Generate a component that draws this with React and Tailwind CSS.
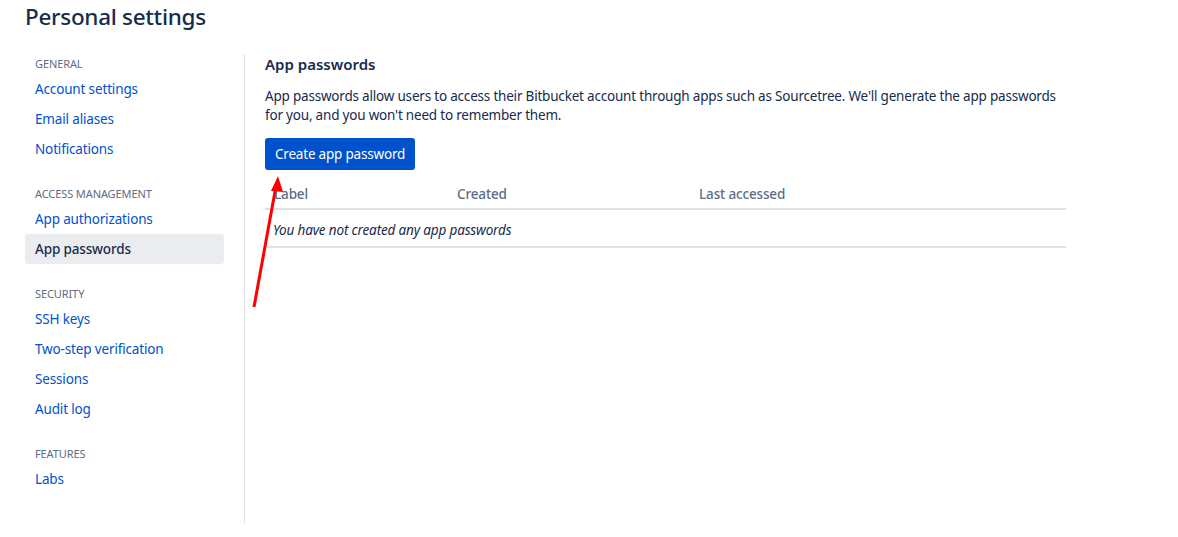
import React from "react";

const sections = [
  { title: "GENERAL", items: ["Account settings", "Email aliases", "Notifications"] },
  { title: "ACCESS MANAGEMENT", items: ["App authorizations", "App passwords"] },
  { title: "SECURITY", items: ["SSH keys", "Two-step verification", "Sessions", "Audit log"] },
  { title: "FEATURES", items: ["Labs"] },
];

export default function App() {
  return (
    <div
      className="relative w-[1178px] h-[537px] bg-white text-[#172b4d] overflow-hidden"
      style={{ fontFamily: '"Noto Sans", "Open Sans", sans-serif' }}
    >
      <h1 className="pl-[25px] pt-[2px] h-[54px] text-[22.5px] leading-[30px] font-medium text-[#172b4d] tracking-[-0.3px]">
        Personal settings
      </h1>
      <div className="flex">
        <nav className="w-[219px] ml-[25px] pb-[14px]">
          {sections.map((s, si) => (
            <div key={s.title} className={si === 0 ? "" : "mt-[20px]"}>
              <div className="h-[20px] pl-[10px] flex items-center text-[11px] text-[#5e6c84] tracking-[-0.1px]">
                {s.title}
              </div>
              {s.items.map((it) => {
                const active = it === "App passwords";
                return (
                  <div
                    key={it}
                    className={
                      "h-[30px] w-[199px] pl-[10px] flex items-center text-[13.5px] tracking-[-0.15px] rounded-[3px] " +
                      (active ? "bg-[#ebecf0] text-[#172b4d] font-medium" : "text-[#0052cc]")
                    }
                  >
                    {it}
                  </div>
                );
              })}
            </div>
          ))}
        </nav>
        <div className="w-px bg-[#dfe1e6] h-[470px]" />
        <main className="pl-[20px] w-[822px]">
          <h2 className="text-[15px] leading-[20px] font-semibold text-[#172b4d]">App passwords</h2>
          <p className="mt-[13px] text-[13.5px] leading-[19px] tracking-[-0.2px] text-[#172b4d] w-[801px]">
            App passwords allow users to access their Bitbucket account through apps such as Sourcetree. We'll generate the app passwords for you, and you won't need to remember them.
          </p>
          <button className="mt-[13px] h-[32px] px-[10px] rounded-[3px] bg-[#0052cc] text-white text-[13.5px] tracking-[-0.2px]">
            Create app password
          </button>
          <table className="mt-[8px] w-[801px] border-collapse text-[13.5px] tracking-[-0.15px]">
            <thead>
              <tr className="border-b-2 border-[#dfe1e6]">
                <th className="text-left font-medium text-[#5e6c84] h-[31px] pt-[3px] pl-[9px] w-[192px]">Label</th>
                <th className="text-left font-medium text-[#5e6c84] pt-[3px] w-[242px]">Created</th>
                <th className="text-left font-medium text-[#5e6c84] pt-[3px]">Last accessed</th>
              </tr>
            </thead>
            <tbody>
              <tr className="border-b-2 border-[#dfe1e6]">
                <td colSpan={3} className="h-[38px] pt-[4px] pl-[8px] italic text-[#172b4d]">
                  You have not created any app passwords
                </td>
              </tr>
            </tbody>
          </table>
        </main>
      </div>
      <svg className="absolute left-0 top-0 pointer-events-none" width="1178" height="537">
        <line x1="254" y1="307" x2="276" y2="186" stroke="#ff0000" strokeWidth="3" />
        <polygon points="278,176 271,191 283,192" fill="#ff0000" />
      </svg>
    </div>
  );
}
